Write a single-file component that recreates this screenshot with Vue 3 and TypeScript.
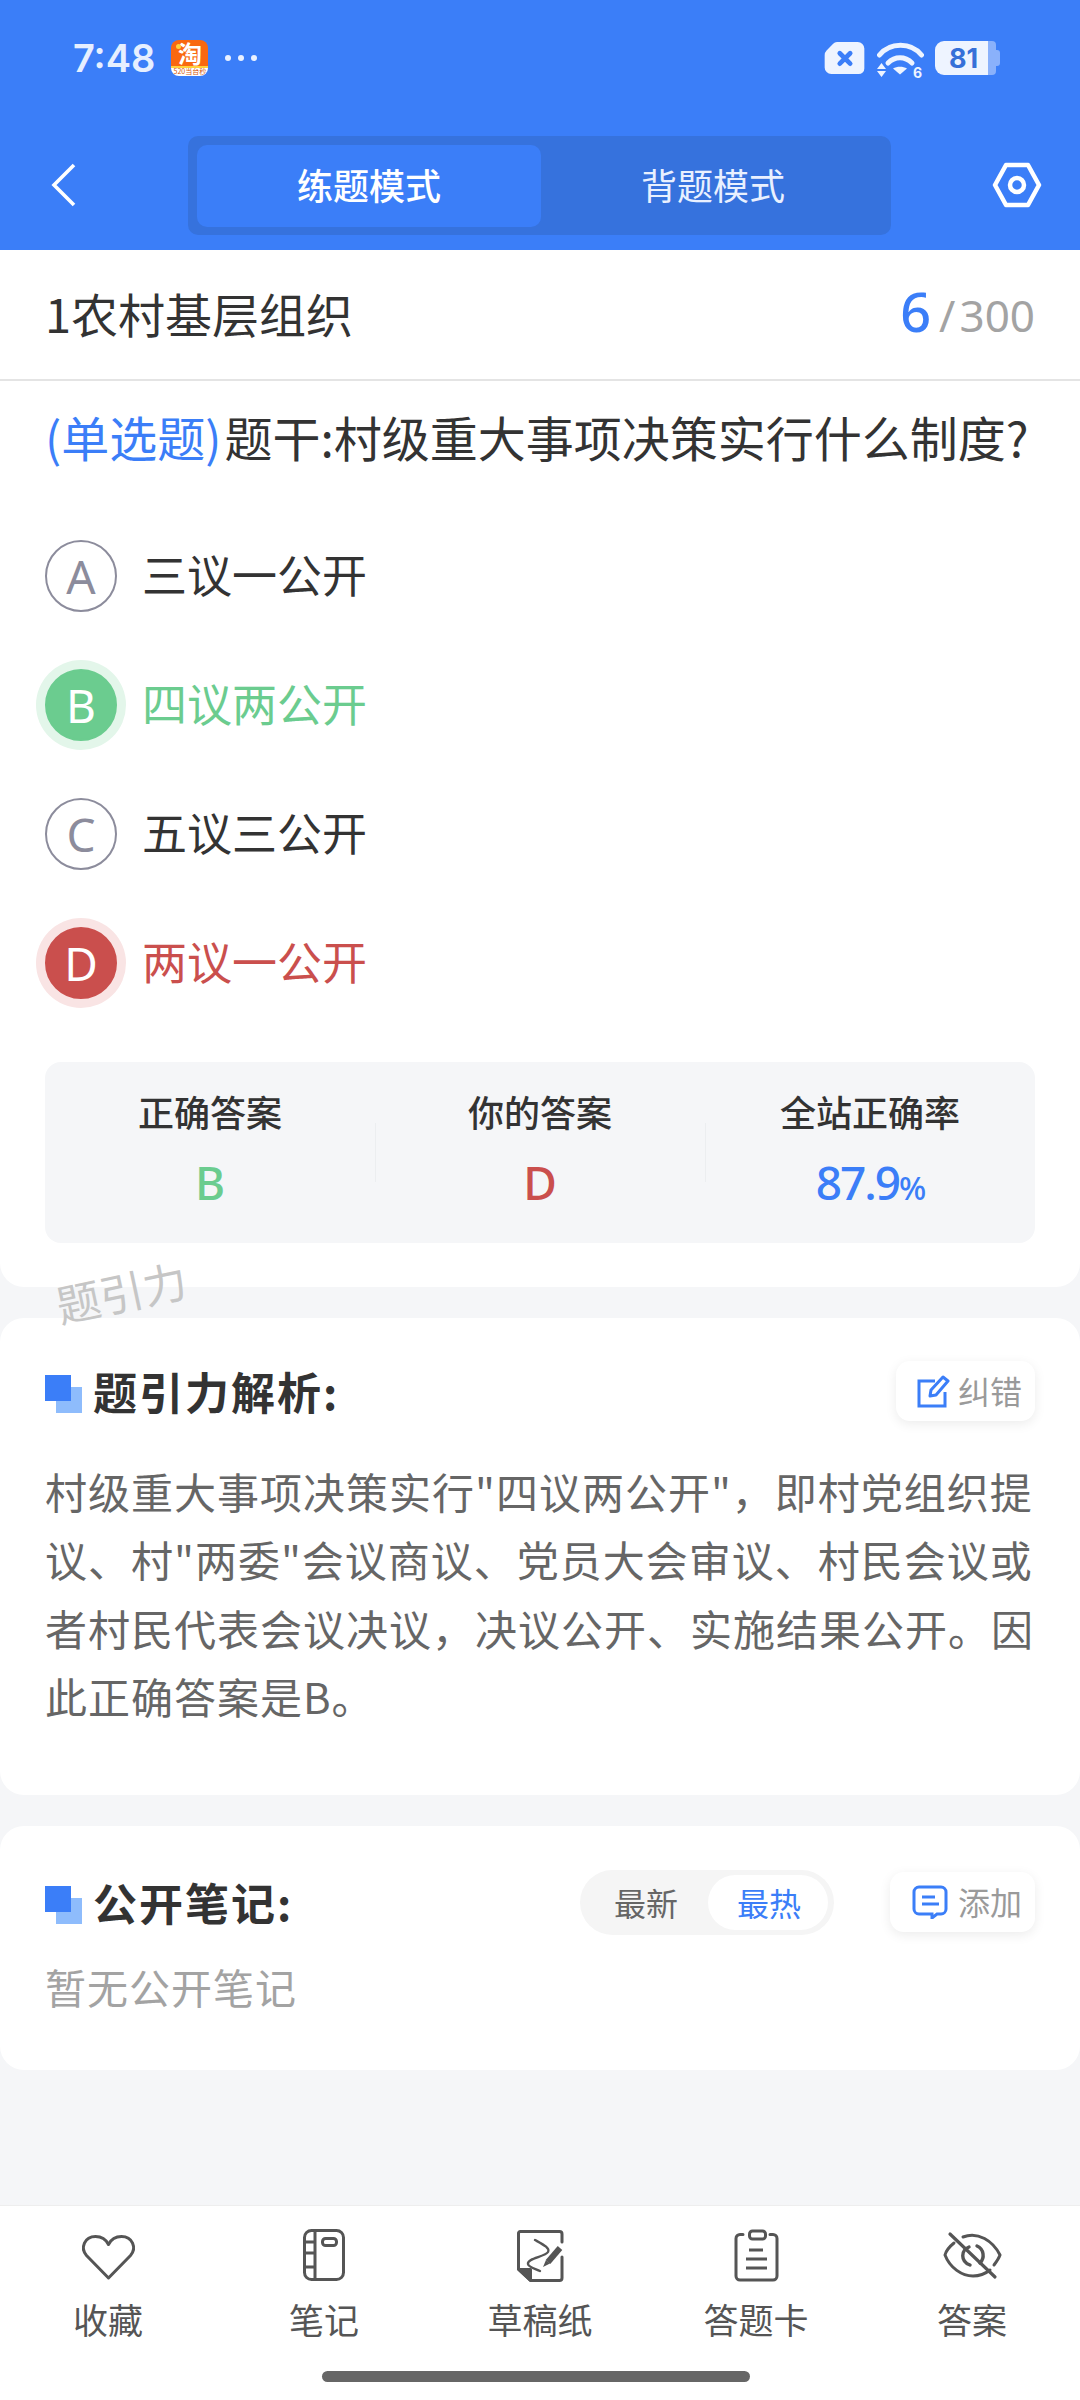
<script setup lang="ts">
interface Option { letter: string; text: string; state: string }
const options: Option[] = [
  { letter: 'A', text: '三议一公开', state: 'plain' },
  { letter: 'B', text: '四议两公开', state: 'right' },
  { letter: 'C', text: '五议三公开', state: 'plain' },
  { letter: 'D', text: '两议一公开', state: 'wrong' },
]
const tools = ['收藏', '笔记', '草稿纸', '答题卡', '答案']
</script>

<template>
  <div class="page">
    <header class="top">
      <div class="status">
        <div class="status-left">
          <span class="time">7:48</span>
          <span class="tao"><span class="tao-main">淘</span><span class="tao-sub">520当台秒</span></span>
          <span class="dots"><i></i><i></i><i></i></span>
        </div>
        <div class="status-right">
          <svg class="sim" width="43" height="34" viewBox="0 0 44 36"><path d="M14 1h22a7 7 0 0 1 7 7v21a6 6 0 0 1-6 6H8a7 7 0 0 1-7-7V15a7 7 0 0 1 2-5l7-7a6 6 0 0 1 4-2z" fill="#eef4ff"/><path d="M17 13l11 11M28 13L17 24" stroke="#3b7ef8" stroke-width="5" stroke-linecap="round"/></svg>
          <svg class="wifi" width="47" height="48" viewBox="-1 -9 47 48"><path d="M1.500 12C12-1 33-1 43.500 12" stroke="#eef4ff" stroke-width="5" fill="none" stroke-linecap="round"/><path d="M10 20c7-7 17-7 24 0" stroke="#eef4ff" stroke-width="5" fill="none" stroke-linecap="round"/><path d="M15 25.500c4-2.500 10-2.500 14 0l-7 6z" fill="#eef4ff"/><path d="M3.500 20l4.500 6h-9zM3.500 34l4.500-6h-9z" fill="#eef4ff"/><text x="35" y="35" class="six">6</text></svg>
          <span class="battery"><span class="batt-num">81</span></span>
        </div>
      </div>
      <div class="nav">
        <svg class="back" width="28" height="46" viewBox="0 0 28 46"><path d="M25 3L5 23l20 20" fill="none" stroke="#fff" stroke-width="3.600"/></svg>
        <div class="tabs">
          <div class="tab active">练题模式</div>
          <div class="tab">背题模式</div>
        </div>
        <svg class="gear" width="50" height="46" viewBox="0 0 50 46"><path d="M14 3h22l11 20-11 20H14L3 23z" fill="none" stroke="#fff" stroke-width="4.500" stroke-linejoin="round"/><circle cx="25" cy="23" r="7" fill="none" stroke="#fff" stroke-width="4.500"/></svg>
      </div>
    </header>

    <section class="card question">
      <div class="title-row">
        <span class="title">1农村基层组织</span>
        <span class="count"><b>6</b><i>/</i>300</span>
      </div>
      <div class="stem"><span class="type">(单选题)</span>题干:村级重大事项决策实行什么制度?</div>
      <div class="options">
        <div v-for="o in options" :key="o.letter" class="option" :class="o.state">
          <span class="circle">{{ o.letter }}</span>
          <span class="opt-text">{{ o.text }}</span>
        </div>
      </div>
      <div class="stats">
        <div class="stat">
          <div class="stat-label">正确答案</div>
          <div class="stat-val green">B</div>
        </div>
        <div class="stat">
          <div class="stat-label">你的答案</div>
          <div class="stat-val red">D</div>
        </div>
        <div class="stat">
          <div class="stat-label">全站正确率</div>
          <div class="stat-val blue">87.9<small>%</small></div>
        </div>
      </div>
    </section>

    <section class="card analysis">
      <div class="watermark">题引力</div>
      <div class="sec-head">
        <div class="sec-title"><span class="mark"></span>题引力解析:</div>
        <div class="chip">
          <svg width="33" height="33" viewBox="0 0 33 33"><path d="M18 6H2v25h26V17" fill="none" stroke="#3b7ef8" stroke-width="3"/><path d="M13 21l1-6L26 2l5 4-12 14z" fill="none" stroke="#3b7ef8" stroke-width="3" stroke-linejoin="round"/></svg>
          <span>纠错</span>
        </div>
      </div>
      <p class="body">村级重大事项决策实行"四议两公开"，即村党组织提议、村"两委"会议商议、党员大会审议、村民会议或者村民代表会议决议，决议公开、实施结果公开。因此正确答案是B。</p>
    </section>

    <section class="card notes">
      <div class="sec-head">
        <div class="sec-title"><span class="mark"></span>公开笔记:</div>
        <div class="notes-actions">
          <div class="sort"><span>最新</span><span class="on">最热</span></div>
          <div class="chip add">
            <svg width="36" height="34" viewBox="0 0 36 34"><path d="M7 2h22a5 5 0 0 1 5 5v17a5 5 0 0 1-5 5h-4l-5 4v-4H7a5 5 0 0 1-5-5V7a5 5 0 0 1 5-5z" fill="none" stroke="#3b7ef8" stroke-width="3"/><path d="M10 12h13M10 19h17" stroke="#3b7ef8" stroke-width="3"/></svg>
            <span>添加</span>
          </div>
        </div>
      </div>
      <div class="empty">暂无公开笔记</div>
    </section>

    <div class="spacer"></div>

    <footer class="toolbar">
      <div class="tools">
        <div v-for="(t, i) in tools" :key="t" class="tool">
          <svg width="64" height="56" viewBox="0 0 64 56" fill="none" stroke="#555" stroke-width="3" stroke-linecap="round">
            <path v-if="i === 0" d="M32.500 50L10.500 27.500C4 20 8.500 8.500 19.500 8.500c5.500 0 10.500 3 13 8 2.500-5 7.500-8 13-8 11 0 15.500 11.500 9 19z" stroke-linejoin="round" />
            <g v-else-if="i === 1">
              <rect x="12.500" y="2.500" width="39" height="49" rx="7" />
              <path d="M23 3v48M13 14h10M13 25h10M13 39h10" />
              <rect x="30.500" y="10.500" width="14" height="7" rx="3" />
            </g>
            <g v-else-if="i === 2">
              <path d="M54 14V6a2.500 2.500 0 0 0-2.500-2.500h-39A2 2 0 0 0 10.500 6v35l12 11.500H51.500A2.500 2.500 0 0 0 54 50V29" stroke-linejoin="round" />
              <path d="M10.500 41.500h12v11z" fill="#555" stroke-linejoin="round" />
              <path d="M27 12C36 17 42 20 40 24 37 29 19 30 20 36c0 3 8 5 12 7" stroke-width="2.400" />
              <path d="M40 34l12-14" stroke-width="6" stroke-linecap="butt" />
              <path d="M35 39l3-7 4 3.500z" fill="#555" stroke="none" />
            </g>
            <g v-else-if="i === 3">
              <path d="M19 6.500h-3a4 4 0 0 0-4 4V48a4 4 0 0 0 4 4h33a4 4 0 0 0 4-4V10.500a4 4 0 0 0-4-4h-3" />
              <rect x="25.500" y="3" width="16" height="8" rx="3" />
              <path d="M25 22h14M22 31h21M22 40h21" stroke-linecap="butt" />
            </g>
            <g v-else>
              <path d="M14 15C9 19 6 23 5 27c5 13 17 21 28 21 6 0 12-2 17-6" />
              <path d="M23 9C38 3 53 13 60 27c-1 3-3 6-6 10" />
              <path d="M29 19c-8 3-9 14 1 18" stroke-width="3.400" />
              <path d="M37 18c7 3 8 12 3 17" stroke-width="3.400" />
              <path d="M10 6l45 43" stroke-width="3.200" />
            </g>
          </svg>
          <span class="tool-label">{{ t }}</span>
        </div>
      </div>
      <div class="home"></div>
    </footer>
  </div>
</template>

<style>
html, body { margin: 0; padding: 0; background: #f5f6f8; }
</style>

<style scoped>
.page {
  width: 1080px;
  height: 2400px;
  display: flex;
  flex-direction: column;
  background: #f5f6f8;
  font-family: "Noto Sans CJK SC", "Noto Sans", sans-serif;
  color: #333;
  overflow: hidden;
}
.top { background: #3b7ef8; height: 250px; flex: none; }
.status { height: 116px; display: flex; justify-content: space-between; align-items: center; padding: 0 80px 0 73px; box-sizing: border-box; }
.status-left, .status-right { display: flex; align-items: center; }
.status-right { gap: 0; }
.time { font-family: Inter, "Noto Sans", sans-serif; font-weight: 600; font-size: 38px; color: #e6efff; }
.tao { margin-left: 16px; width: 37px; height: 36px; border-radius: 8px; background: linear-gradient(#f9680f 72%, #ffd23c 72%, #ffd23c 77%, #fff 77%); display: flex; flex-direction: column; align-items: center; position: relative; }
.tao::before { content: ""; position: absolute; left: 5px; top: 4px; width: 5px; height: 5px; border-radius: 50%; background: #ffd23c; }
.tao-main { font-size: 24px; line-height: 26px; color: #fff; font-weight: 700; }
.tao-sub { font-size: 7px; line-height: 10px; color: #d4570d; white-space: nowrap; }
.dots { display: flex; gap: 7px; margin-left: 17px; }
.dots i { width: 6px; height: 6px; border-radius: 50%; background: #eaf1ff; display: block; }
.wifi { margin-left: 11px; }
.six { font: 700 14px Inter, sans-serif; fill: #eef4ff; }
.battery { margin-left: 11px; margin-right: 12px; width: 53px; height: 34px; background: #eef4ff; border-radius: 9px 0 0 9px; display: flex; align-items: center; justify-content: center; padding-left: 4px; box-sizing: border-box; position: relative; }
.battery::after { content: ""; position: absolute; left: 100%; top: 0; width: 8px; height: 34px; background: #8ab1fb; border-radius: 0 4px 4px 0; }
.battery::before { content: ""; position: absolute; left: calc(100% + 8px); top: 9px; width: 4px; height: 16px; background: #8ab1fb; border-radius: 0 3px 3px 0; }
.batt-num { font: 700 27px Inter, sans-serif; color: #3670d8; }
.nav { height: 134px; display: flex; align-items: flex-start; padding: 0 38px 0 49px; box-sizing: border-box; }
.back { margin-top: 46px; flex: none; }
.gear { margin: 46px 0 0 auto; flex: none; }
.tabs { margin: 20px 0 0 111px; width: 703px; height: 99px; background: #3672dd; border-radius: 10px; display: flex; padding: 9px 7px 9px 9px; box-sizing: border-box; }
.tab { width: 344px; height: 82px; flex: none; text-align: center; line-height: 78px; font-size: 36px; color: #e9f0ff; border-radius: 10px; }
.tab.active { background: #3b7ef8; color: #fff; font-weight: 500; }

.card { background: #fff; border-radius: 24px; flex: none; }
.question { height: 1037px; border-radius: 0 0 24px 24px; }
.title-row { height: 131px; border-bottom: 2px solid #e4e4e4; display: flex; align-items: center; justify-content: space-between; padding: 0 45px 5px; box-sizing: border-box; }
.title { font-size: 47px; color: #333; }
.count { font-family: "Noto Sans", sans-serif; font-size: 44px; color: #a3a3a3; display: flex; align-items: baseline; margin-bottom: 3px; }
.count b { font-weight: 500; font-size: 54px; color: #3b7ef8; }
.count i { font-style: normal; margin: 0 4px 0 8px; }
.stem { font-size: 48px; line-height: 62px; padding: 24px 0 0 45px; white-space: nowrap; }
.type { color: #3b7ef8; margin-right: 3px; }
.options { padding-top: 44px; }
.option { display: flex; align-items: center; height: 129px; padding-left: 45px; font-size: 45px; }
.circle { width: 72px; height: 72px; box-sizing: border-box; border-radius: 50%; border: 2px solid #8c8c9c; color: #8c8c9c; font-family: "Noto Sans", sans-serif; font-size: 46px; display: flex; align-items: center; justify-content: center; flex: none; }
.opt-text { margin-left: 25px; padding-bottom: 5px; }
.right .circle { background: #6bcc8f; border-color: #6bcc8f; color: #fff; box-shadow: 0 0 0 9px #e3f6ea; }
.right .opt-text { color: #6bcc8f; }
.wrong .circle { background: #ca4f4d; border-color: #ca4f4d; color: #fff; box-shadow: 0 0 0 9px #f9e4e4; }
.wrong .opt-text { color: #ca4f4d; }
.stats { margin: 35px 45px 0; height: 181px; background: #f5f6f8; border-radius: 16px; display: grid; grid-template-columns: 1fr 1fr 1fr; }
.stat { text-align: center; padding-top: 25px; position: relative; }
.stat + .stat::before { content: ""; position: absolute; left: 0; top: 61px; height: 59px; width: 1px; background: #eceef0; }
.stat-label { font-size: 36px; line-height: 48px; font-weight: 500; color: #333; }
.stat-val { font-family: "Noto Sans", sans-serif; font-size: 46px; line-height: 60px; margin-top: 17px; font-weight: 500; }
.stat-val small { font-size: 32px; }
.green { color: #6bcc8f; }
.red { color: #ca4f4d; }
.blue { color: #3b7ef8; letter-spacing: -2px; }

.analysis { margin-top: 31px; height: 477px; position: relative; }
.watermark { position: absolute; left: 55px; top: -57px; font-size: 44px; line-height: 60px; color: #c6c6c6; transform: rotate(-12deg); }
.sec-head { display: flex; justify-content: space-between; align-items: center; padding: 43px 45px 0; height: 60px; }
.sec-title { font-size: 44px; font-weight: 700; color: #333; display: flex; align-items: center; letter-spacing: 2px; }
.mark { width: 26px; height: 26px; background: #3b7ef8; margin-right: 22px; flex: none; box-shadow: 11px 12px 0 0 #8ebcfc; margin-top: -6px; }
.chip { display: flex; align-items: center; gap: 8px; height: 60px; padding: 0 13px 0 21px; border-radius: 14px; background: #fff; box-shadow: 0 3px 12px rgba(0,0,0,.08); font-size: 32px; color: #9a9a9a; }
.chip span { padding-bottom: 2px; }
.body { margin: 36px 45px 0; font-size: 42px; line-height: 68.400px; color: #666; letter-spacing: 1px; }

.notes { margin-top: 31px; height: 244px; }
.notes .sec-head { padding-top: 46px; }
.notes-actions { display: flex; align-items: center; gap: 56px; }
.sort { height: 65px; border-radius: 33px; background: #f5f5f5; display: flex; align-items: center; padding: 0 6px 0 34px; gap: 30px; font-size: 32px; color: #666; }
.sort .on { background: #fff; color: #3b7ef8; height: 55px; line-height: 55px; padding: 0 27px 0 29px; border-radius: 28px; }
.add { gap: 10px; padding-left: 22px; }
.empty { font-size: 41px; line-height: 56px; color: #a3a3a3; margin: 26px 45px 0; letter-spacing: 1px; }

.spacer { flex: 1; }
.toolbar { height: 195px; flex: none; background: #fff; border-top: 1px solid #eee; box-sizing: border-box; position: relative; }
.tools { display: grid; grid-template-columns: repeat(5, 216px); padding-top: 22px; }
.tool { display: flex; flex-direction: column; align-items: center; }
.tool-label { font-size: 35px; line-height: 48px; color: #555; margin-top: 11px; }
.home { position: absolute; left: 322px; top: 165px; width: 428px; height: 11px; border-radius: 6px; background: #666; }
</style>
